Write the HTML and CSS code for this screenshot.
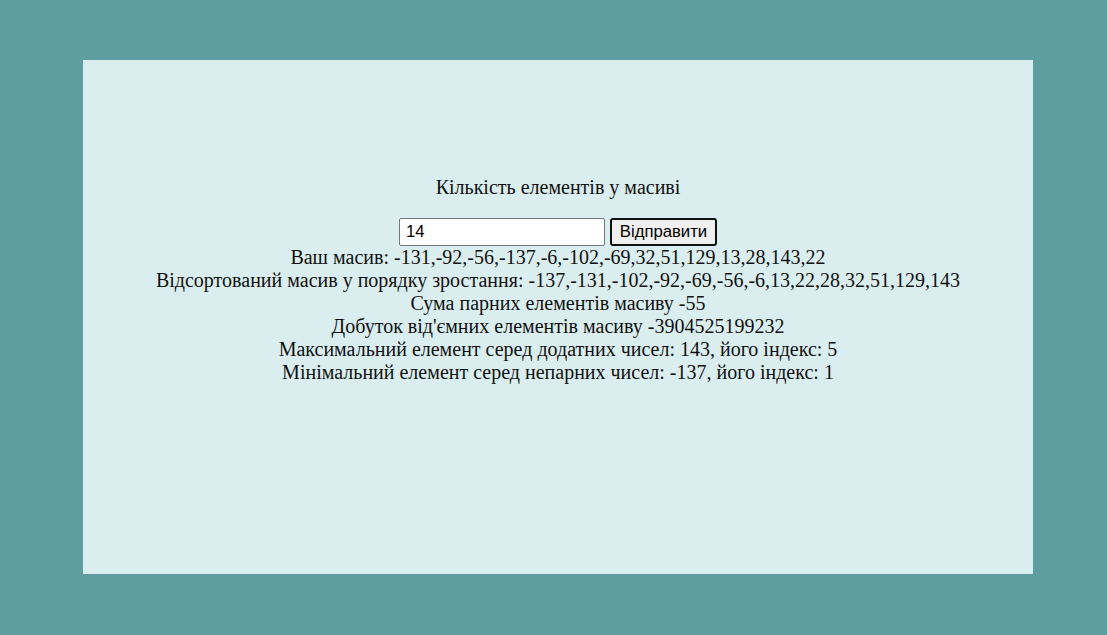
FILE: index.html
```html
<!DOCTYPE html>
<html lang="uk">
<head>
<meta charset="utf-8">
<title>Масив</title>
<link rel="stylesheet" href="styles.css">
</head>
<body>
<main class="box">
  <p class="title">Кількість елементів у масиві</p>
  <form class="form">
    <input class="num" type="text" value="14">
    <button class="send" type="button">Відправити</button>
  </form>
  <div class="results">
    <div>Ваш масив: -131,-92,-56,-137,-6,-102,-69,32,51,129,13,28,143,22</div>
    <div>Відсортований масив у порядку зростання: -137,-131,-102,-92,-69,-56,-6,13,22,28,32,51,129,143</div>
    <div>Сума парних елементів масиву -55</div>
    <div>Добуток від'ємних елементів масиву -3904525199232</div>
    <div>Максимальний елемент серед додатних чисел: 143, його індекс: 5</div>
    <div>Мінімальний елемент серед непарних чисел: -137, його індекс: 1</div>
  </div>
</main>
</body>
</html>
```
FILE: styles.css
```css
html, body {
  margin: 0;
  padding: 0;
}
body {
  background: #5f9ea0;
  height: 635px;
  padding-top: 60px;
  box-sizing: border-box;
  font-family: "Liberation Serif", "Times New Roman", serif;
  font-size: 20px;
  line-height: 23px;
  color: #111;
}
.box {
  margin-left: 83px;
  width: 950px;
  height: 514px;
  background: #dbeeef;
  text-align: center;
  padding-top: 116px;
  box-sizing: border-box;
}
.title {
  margin: 0 0 19px;
}
.form {
  display: flex;
  justify-content: center;
  gap: 5px;
  margin: 0;
  padding-left: 0;
}
.num {
  width: 206px;
  height: 28px;
  box-sizing: border-box;
  border: 1px solid #767676;
  border-radius: 2px;
  padding: 1px 6px;
  font-family: "Liberation Sans", Arial, sans-serif;
  font-size: 16.7px;
  color: #000;
  background: #fff;
  margin: 0;
}
.send {
  width: 107px;
  height: 28px;
  box-sizing: border-box;
  border: 2px solid #111;
  border-radius: 3px;
  background: #efefef;
  font-family: "Liberation Sans", Arial, sans-serif;
  font-size: 16.7px;
  color: #000;
  padding: 0;
  margin: 0;
}
.results {
  margin: 0;
}
```
